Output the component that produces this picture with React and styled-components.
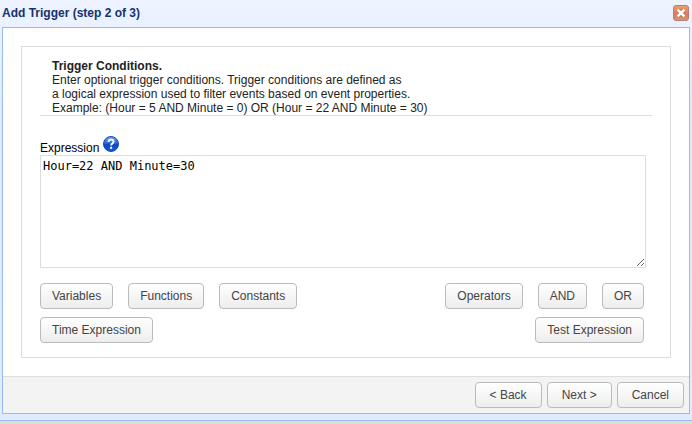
import { useState } from 'react';
import styled, { createGlobalStyle } from 'styled-components';

const GlobalStyle = createGlobalStyle`
  * {
    box-sizing: border-box;
  }

  body {
    margin: 0;
    background: #dedede;
    font-family: Arial, 'Liberation Sans', sans-serif;
    font-size: 12px;
    line-height: 14px;
    color: #222;
  }
`;

const StyledWindow = styled.section`
  padding: 0 2px 6px;
  background: linear-gradient(#edf3ff, #dfe8ff 120px, #dfecff);
  border-bottom: 1px solid #99bbe8;
  box-shadow: 0 1px 2px #bbb;
`;

const StyledHeader = styled.header`
  display: flex;
  justify-content: space-between;
  align-items: center;
  height: 27px;
  padding: 0 1px 2px 0;
`;

const StyledTitle = styled.h1`
  margin: 0;
  font-size: 12px;
  color: #15326b;
`;

const StyledClose = styled.button`
  display: flex;
  padding: 0;
  border: none;
  background: none;
  cursor: pointer;
`;

const StyledBody = styled.div`
  border: 1px solid #99bbe8;
  background: white;
`;

const StyledPanel = styled.div`
  margin: 18px;
  padding: 12px 18px 14px;
  border: 1px solid #ddd;
`;

const StyledIntro = styled.div`
  padding-left: 12px;
  border-bottom: 1px solid #ddd;
`;

const StyledIntroTitle = styled.h2`
  margin: 0;
  font-size: 12px;
`;

const StyledText = styled.p`
  max-width: 400px;
  margin: 0;
`;

const StyledField = styled.div`
  display: flex;
  align-items: flex-end;
  gap: 4px;
  padding-top: 20px;
  color: #000;
`;

const StyledHelp = styled.button`
  display: flex;
  padding: 0 0 3px;
  border: none;
  background: none;
  cursor: help;
`;

const StyledTextarea = styled.textarea`
  display: block;
  width: calc(100% - 6px);
  height: 113px;
  padding: 2px;
  border: 1px solid #ddd;
  outline: none;
  font-family: 'DejaVu Sans Mono', monospace;
  font-size: 12px;
  line-height: 16px;
  color: #000;
`;

const StyledRow = styled.div`
  display: flex;
  justify-content: space-between;
  margin-top: ${(props) => `${props.$top}px`};
  padding-right: 8px;
`;

const StyledGroup = styled.div`
  display: flex;
  gap: 15px;
`;

const StyledButton = styled.button`
  height: 26px;
  padding: 0 ${(props) => (props.$wide ? 14 : 11)}px;
  border: 1px solid #bbb;
  border-radius: 4px;
  background: linear-gradient(#fff, #ededed);
  font-family: inherit;
  font-size: 12px;
  line-height: 14px;
  color: #444;
  cursor: pointer;
`;

const StyledFooter = styled.footer`
  display: flex;
  justify-content: flex-end;
  gap: 5px;
  padding: 5px;
  border-top: 1px solid #ddd;
  background: #f3f3f3;
`;

const CloseIcon = () => (
  <svg width="16" height="16" viewBox="0 0 16 16" aria-hidden="true">
    <defs>
      <linearGradient id="close" x1="0" y1="0" x2="0" y2="1">
        <stop offset="0" stopColor="#f3a268" />
        <stop offset="0.3" stopColor="#e58a66" />
        <stop offset="0.6" stopColor="#dc7a5c" />
        <stop offset="1" stopColor="#d49a70" />
      </linearGradient>
    </defs>
    <rect x="0.5" y="0.5" width="15" height="15" rx="2.5" fill="url(#close)" stroke="#b97d74" />
    <path d="M5 5L11 11M11 5L5 11" stroke="#c66f55" strokeWidth="4.4" />
    <path d="M4.6 4.6L11.4 11.4M11.4 4.6L4.6 11.4" stroke="#fff" strokeWidth="2.6" />
  </svg>
);

const HelpIcon = () => (
  <svg width="16" height="16" viewBox="0 0 16 16" aria-hidden="true">
    <defs>
      <linearGradient id="help" x1="0" y1="0" x2="0" y2="1">
        <stop offset="0" stopColor="#7fa6ee" />
        <stop offset="0.45" stopColor="#2f66d8" />
        <stop offset="0.55" stopColor="#0d45c6" />
        <stop offset="1" stopColor="#1a5fe0" />
      </linearGradient>
    </defs>
    <circle cx="8" cy="8" r="7.5" fill="url(#help)" stroke="#1546b4" />
    <path
      d="M5.6 6C5.6 4.4 6.6 3.7 8 3.7C9.5 3.7 10.5 4.5 10.5 5.8C10.5 7.5 8.1 7.6 8.1 9.6"
      fill="none"
      stroke="#fff"
      strokeWidth="1.8"
    />
    <rect x="7.1" y="10.8" width="2" height="2" fill="#fff" />
  </svg>
);

const App = () => {
  const [expression, setExpression] = useState('Hour=22 AND Minute=30');

  const append = (text) => setExpression(`${expression} ${text} `);

  return (
    <>
      <GlobalStyle />
      <StyledWindow>
        <StyledHeader>
          <StyledTitle>Add Trigger (step 2 of 3)</StyledTitle>
          <StyledClose type="button" aria-label="Close">
            <CloseIcon />
          </StyledClose>
        </StyledHeader>
        <StyledBody>
          <StyledPanel>
            <StyledIntro>
              <StyledIntroTitle>Trigger Conditions.</StyledIntroTitle>
              <StyledText>
                Enter optional trigger conditions. Trigger conditions are defined as
                <br />a logical expression used to filter events based on event properties.
                <br />
                Example: (Hour = 5 AND Minute = 0) OR (Hour = 22 AND Minute = 30)
              </StyledText>
            </StyledIntro>
            <StyledField>
              <label htmlFor="expression">Expression</label>
              <StyledHelp type="button" aria-label="Help">
                <HelpIcon />
              </StyledHelp>
            </StyledField>
            <StyledTextarea
              id="expression"
              spellCheck="false"
              value={expression}
              onChange={(e) => setExpression(e.target.value)}
            />
            <StyledRow $top={15}>
              <StyledGroup>
                <StyledButton type="button">Variables</StyledButton>
                <StyledButton type="button">Functions</StyledButton>
                <StyledButton type="button">Constants</StyledButton>
              </StyledGroup>
              <StyledGroup>
                <StyledButton type="button">Operators</StyledButton>
                <StyledButton type="button" onClick={() => append('AND')}>
                  AND
                </StyledButton>
                <StyledButton type="button" onClick={() => append('OR')}>
                  OR
                </StyledButton>
              </StyledGroup>
            </StyledRow>
            <StyledRow $top={8}>
              <StyledButton type="button">Time Expression</StyledButton>
              <StyledButton type="button">Test Expression</StyledButton>
            </StyledRow>
          </StyledPanel>
          <StyledFooter>
            <StyledButton type="button" $wide>
              &lt; Back
            </StyledButton>
            <StyledButton type="button" $wide>
              Next &gt;
            </StyledButton>
            <StyledButton type="button" $wide>
              Cancel
            </StyledButton>
          </StyledFooter>
        </StyledBody>
      </StyledWindow>
    </>
  );
};

export default App;
